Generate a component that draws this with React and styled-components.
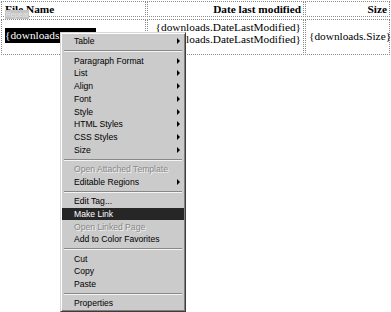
import React from 'react';
import styled, { createGlobalStyle } from 'styled-components';

const GlobalStyle = createGlobalStyle`
  html, body {
    margin: 0;
    padding: 0;
    background: #ffffff;
  }
`;

const Page = styled.div`
  position: relative;
  width: 391px;
  height: 312px;
  overflow: hidden;
  background: #ffffff;
`;

const Grid = styled.table`
  width: 391px;
  margin-top: -1px;
  table-layout: fixed;
  border-collapse: separate;
  border-spacing: 1px 2px;
  font-family: 'Liberation Serif', 'Times New Roman', serif;
  font-size: 11.3px;
  color: #000;
`;

const HeadCell = styled.th`
  position: relative;
  height: 14px;
  padding: 0 ${(p) => (p.$align === 'right' ? '2px' : '0')} 0 ${(p) => (p.$align === 'right' ? '0' : '3px')};
  border: 1px dotted #8a8a8a;
  text-align: ${(p) => p.$align || 'left'};
  font-weight: bold;
  line-height: 14px;
  white-space: nowrap;
`;

const Cell = styled.td`
  height: 31px;
  padding: ${(p) => (p.$top ? '1px 2px 0 0' : '0 2px 3px 3px')};
  border: 1px dotted #8a8a8a;
  text-align: ${(p) => p.$align || 'left'};
  vertical-align: ${(p) => (p.$top ? 'top' : 'middle')};
  line-height: 12px;
  white-space: nowrap;
`;

const Selected = styled.span`
  display: inline-block;
  background: #000;
  color: #fff;
  line-height: 15px;
  padding-right: 1px;
`;

const RepeatTag = styled.span`
  position: absolute;
  left: 3px;
  top: 8px;
  width: 24px;
  height: 9px;
  background: #c4c4c4;
  color: #e6e6e6;
  font-family: 'Liberation Sans', Arial, sans-serif;
  font-size: 7px;
  font-weight: normal;
  line-height: 9px;
  text-align: center;
`;

const Menu = styled.div`
  position: absolute;
  left: 60px;
  top: 32px;
  width: 126px;
  box-sizing: border-box;
  padding: 2px 0 1px;
  background: #cbcbcb;
  border: 1px solid;
  border-color: #d6d6d6 #3c3c3c #3c3c3c #d6d6d6;
  box-shadow: inset 1px 1px 0 #ffffff, inset -1px -1px 0 #808080;
  font-family: 'Liberation Sans', Arial, sans-serif;
  font-size: 8.6px;
`;

const Item = styled.div`
  display: flex;
  align-items: center;
  justify-content: space-between;
  height: 12.75px;
  margin: 0 1px;
  padding: 0 4px 0 12px;
  background: ${(p) => (p.$active ? '#262626' : 'transparent')};
  color: ${(p) => (p.$active ? '#ffffff' : p.$disabled ? '#878787' : '#000000')};
  text-shadow: ${(p) => (p.$disabled ? '1px 1px 0 #f2f2f2' : 'none')};
  white-space: nowrap;
`;

const Arrow = styled.span`
  width: 0;
  height: 0;
  border-left: 3px solid #000;
  border-top: 3px solid transparent;
  border-bottom: 3px solid transparent;
`;

const Separator = styled.div`
  height: 0;
  margin: 2.25px 3px;
  border-top: 1px solid #888888;
  border-bottom: 1px solid #f4f4f4;
`;

const menu = [
  { label: 'Table', sub: true },
  '-',
  { label: 'Paragraph Format', sub: true },
  { label: 'List', sub: true },
  { label: 'Align', sub: true },
  { label: 'Font', sub: true },
  { label: 'Style', sub: true },
  { label: 'HTML Styles', sub: true },
  { label: 'CSS Styles', sub: true },
  { label: 'Size', sub: true },
  '-',
  { label: 'Open Attached Template', disabled: true },
  { label: 'Editable Regions', sub: true },
  '-',
  { label: 'Edit Tag...' },
  { label: 'Make Link', active: true },
  { label: 'Open Linked Page', disabled: true },
  { label: 'Add to Color Favorites' },
  '-',
  { label: 'Cut' },
  { label: 'Copy' },
  { label: 'Paste' },
  '-',
  { label: 'Properties' },
];

export default function App() {
  return (
    <Page>
      <GlobalStyle />
      <Grid>
        <colgroup>
          <col style={{ width: 145 }} />
          <col style={{ width: 157 }} />
          <col style={{ width: 85 }} />
        </colgroup>
        <thead>
          <tr>
            <HeadCell>
              File Name
              <RepeatTag>Repeat</RepeatTag>
            </HeadCell>
            <HeadCell $align="right">Date last modified</HeadCell>
            <HeadCell $align="right">Size</HeadCell>
          </tr>
        </thead>
        <tbody>
          <tr>
            <Cell>
              <Selected>{'{downloads.Name}'}</Selected>
            </Cell>
            <Cell $align="right" $top>
              {'{downloads.DateLastModified}'}
              <br />
              {'{downloads.DateLastModified}'}
            </Cell>
            <Cell $align="right">{'{downloads.Size}'}</Cell>
          </tr>
        </tbody>
      </Grid>
      <Menu>
        {menu.map((m, i) =>
          m === '-' ? (
            <Separator key={i} />
          ) : (
            <Item key={i} $active={m.active} $disabled={m.disabled}>
              {m.label}
              {m.sub && <Arrow />}
            </Item>
          )
        )}
      </Menu>
    </Page>
  );
}
